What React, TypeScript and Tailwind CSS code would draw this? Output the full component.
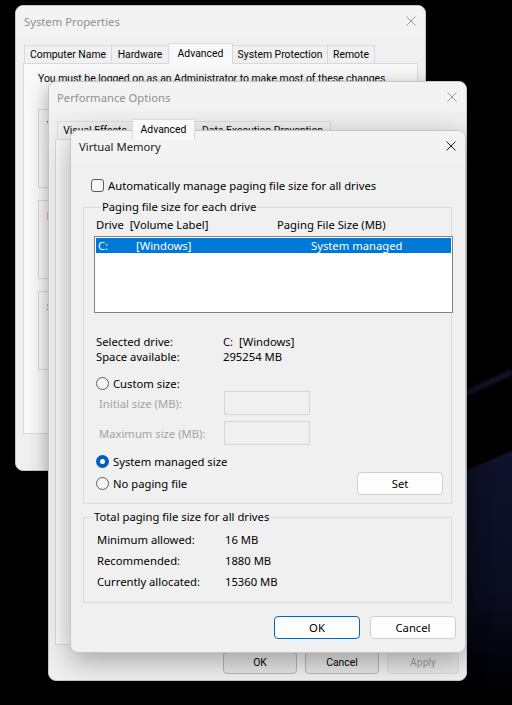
import type { ReactNode } from 'react';

function CloseIcon({ active }: { active?: boolean }) {
  return (
    <svg width="10" height="10" viewBox="0 0 10 10" className="shrink-0">
      <path d="M0.5 0.5 L9.5 9.5 M9.5 0.5 L0.5 9.5" stroke={active ? '#1a1a1a' : '#9a9a9a'} strokeWidth="1" fill="none" />
    </svg>
  );
}

function Window({ title, active, className, children }: { title: string; active?: boolean; className: string; children: ReactNode }) {
  return (
    <div className={`absolute flex flex-col overflow-hidden rounded-lg border border-[#c6c6c6] bg-[#f0f0f0] ${className}`}>
      <div className="flex h-[30px] shrink-0 items-center justify-between bg-[#f3f3f3] pl-[8px] pr-[9px] font-['Segoe_UI','Noto_Sans',sans-serif] text-[11.25px]">
        <span className={active ? 'text-[#1a1a1a]' : 'text-[#8f8f8f]'}>{title}</span>
        <CloseIcon active={active} />
      </div>
      {children}
    </div>
  );
}

function Radio({ checked }: { checked?: boolean }) {
  if (checked) {
    return (
      <span className="flex h-[13px] w-[13px] shrink-0 items-center justify-center rounded-full bg-[#005fb8]">
        <span className="h-[5px] w-[5px] rounded-full bg-white" />
      </span>
    );
  }
  return <span className="h-[13px] w-[13px] shrink-0 rounded-full border border-[#5c5c5c] bg-[#f5f5f5]" />;
}

function Button({ label, primary, dim, disabled, className }: { label: string; primary?: boolean; dim?: boolean; disabled?: boolean; className: string }) {
  let look = 'border-[#d0d0d0] bg-[#fdfdfd] text-black';
  if (primary) look = 'border-[#0067c0] bg-[#fdfdfd] text-black';
  if (dim) look = 'border-[#b8b8b8] bg-[#e6e6e6] text-black';
  if (disabled) look = 'border-[#dcdcdc] bg-[#e8e8e8] text-[#9d9d9d]';
  return (
    <div className={`flex h-[23px] shrink-0 items-center justify-center whitespace-nowrap rounded-[4px] border ${look} ${className}`}>
      {label}
    </div>
  );
}

function Tab({ label, selected, width }: { label: string; selected?: boolean; width: string }) {
  return (
    <div
      className={`-ml-px flex shrink-0 items-center justify-center whitespace-nowrap border border-b-0 border-[#d9d9d9] ${width} ${
        selected ? 'z-10 -mb-px h-[21px] bg-[#f9f9f9] pb-[2px]' : 'h-[18px] bg-[#f0f0f0]'
      }`}
    >
      {label}
    </div>
  );
}

function SmallGroup({ title, text, className }: { title: string; text: string; className?: string }) {
  return (
    <fieldset className={`h-[86px] shrink-0 border border-[#dcdcdc] px-[8px] ${className ?? ''}`}>
      <legend className="ml-[5px] whitespace-nowrap px-[2px]">{title}</legend>
      <p className="mt-[1px] whitespace-nowrap">{text}</p>
      <div className="mt-[24px] flex justify-end">
        <Button label="Settings..." className="w-[75px]" />
      </div>
    </fieldset>
  );
}

function Wallpaper() {
  return (
    <svg className="absolute inset-0" width="512" height="705" viewBox="0 0 512 705">
      <defs>
        <linearGradient id="navy" x1="0" y1="0" x2="0" y2="1">
          <stop offset="0" stopColor="#0f122b" />
          <stop offset="0.55" stopColor="#0b0d20" />
          <stop offset="0.9" stopColor="#020205" />
          <stop offset="1" stopColor="#000" />
        </linearGradient>
        <filter id="soft">
          <feGaussianBlur stdDeviation="2" />
        </filter>
      </defs>
      <rect width="512" height="705" fill="#000" />
      <polygon points="462,472 512,451 512,705 462,705" fill="url(#navy)" />
      <path d="M455 398 L512 372" stroke="#1c2040" strokeWidth="4" filter="url(#soft)" />
    </svg>
  );
}

export default function App() {
  return (
    <div className="relative h-[705px] w-[512px] overflow-hidden bg-black font-['Segoe_UI','Noto_Sans',sans-serif] text-[11.25px] leading-[15px] text-black">
      <Wallpaper />

      {/* System Properties */}
      <Window title="System Properties" className="left-[15px] top-[5px] h-[466px] w-[411px] shadow-[0_6px_20px_rgba(0,0,0,0.35)]">
        <div className="flex flex-1 flex-col px-[7px] pt-[7px] font-['Roboto',sans-serif] text-[10.4px]">
          <div className="flex items-end pl-[2px]">
            <Tab label="Computer Name" width="w-[88px]" />
            <Tab label="Hardware" width="w-[58px]" />
            <Tab label="Advanced" width="w-[65px]" selected />
            <Tab label="System Protection" width="w-[96px]" />
            <Tab label="Remote" width="w-[48px]" />
          </div>
          <div className="flex h-[371px] flex-col gap-[5px] overflow-hidden border border-[#d9d9d9] bg-[#f9f9f9] px-[14px] pt-[7px]">
            <p className="whitespace-nowrap">You must be logged on as an Administrator to make most of these changes.</p>
            <SmallGroup title="Performance" text="Visual effects, processor scheduling, memory usage, and virtual memory" className="mt-[11px]" />
            <SmallGroup title="User Profiles" text="Desktop settings related to your sign-in" />
            <SmallGroup title="Startup and Recovery" text="System startup, system failure, and debugging information" />
          </div>
          <div className="mt-[8px] flex justify-end gap-[8px]">
            <Button label="OK" className="w-[75px]" />
            <Button label="Cancel" className="w-[75px]" />
            <Button label="Apply" disabled className="w-[75px]" />
          </div>
        </div>
      </Window>

      {/* Performance Options */}
      <Window title="Performance Options" className="left-[48px] top-[81px] h-[600px] w-[419px] shadow-[0_6px_20px_rgba(0,0,0,0.35)]">
        <div className="flex flex-1 flex-col px-[6px] pt-[7px] font-['Roboto',sans-serif] text-[10.4px]">
          <div className="flex items-end pl-[3px]">
            <Tab label="Visual Effects" width="w-[76px]" />
            <Tab label="Advanced" width="w-[63px]" selected />
            <Tab label="Data Execution Prevention" width="w-[137px]" />
          </div>
          <div className="h-[506px] border border-[#d9d9d9] bg-[#f9f9f9]" />
          <div className="mt-[6px] flex justify-end gap-[8px] pr-[1px]">
            <Button label="OK" dim className="w-[74px]" />
            <Button label="Cancel" dim className="w-[74px]" />
            <Button label="Apply" disabled className="w-[72px]" />
          </div>
        </div>
      </Window>

      {/* Virtual Memory */}
      <Window title="Virtual Memory" active className="left-[70px] top-[130px] h-[523px] w-[396px] shadow-[0_8px_28px_rgba(0,0,0,0.32)]">
        <div className="flex flex-1 flex-col pl-[12px] pr-[9px]">
          <label className="mt-[18px] flex h-[13px] items-center gap-[4px] pl-[8px]">
            <span className="h-[13px] w-[13px] shrink-0 rounded-[3px] border border-[#5c5c5c] bg-[#f5f5f5]" />
            <span className="whitespace-nowrap">Automatically manage paging file size for all drives</span>
          </label>

          <fieldset className="mr-[4px] mt-[7px] h-[305px] border border-[#dcdcdc] pl-[10px]">
            <legend className="ml-[7px] px-[1px] leading-[16px]">Paging file size for each drive</legend>
            <div className="mt-[2px] flex whitespace-nowrap pl-[2px]">
              <span className="w-[181px] whitespace-pre">{'Drive  [Volume Label]'}</span>
              <span>Paging File Size (MB)</span>
            </div>
            <div className="-mr-[2px] mt-[4px] h-[77px] border border-[#828282] bg-white p-[1px]">
              <div className="flex h-[15px] items-center whitespace-nowrap bg-[#0078d7] pl-[2px] text-white">
                <span className="w-[38px]">C:</span>
                <span className="w-[175px]">[Windows]</span>
                <span>System managed</span>
              </div>
            </div>

            <div className="mt-[21px] grid grid-cols-[127px_1fr] whitespace-nowrap pl-[2px]">
              <span>Selected drive:</span>
              <span className="whitespace-pre">{'C:  [Windows]'}</span>
              <span>Space available:</span>
              <span>295254 MB</span>
            </div>

            <div className="mt-[12px] flex items-center gap-[4px] pl-[2px]">
              <Radio />
              <span>Custom size:</span>
            </div>
            <div className="flex flex-col gap-[6px] whitespace-nowrap pl-[5px] text-[#a3a3a3]">
              <div className="flex items-center">
                <span className="w-[125px]">Initial size (MB):</span>
                <span className="h-[24px] w-[86px] border border-[#d6d6d6] bg-[#f0f0f0]" />
              </div>
              <div className="flex items-center">
                <span className="w-[125px]">Maximum size (MB):</span>
                <span className="h-[24px] w-[86px] border border-[#d6d6d6] bg-[#f0f0f0]" />
              </div>
            </div>

            <div className="mt-[9px] flex items-center gap-[4px] pl-[2px]">
              <Radio checked />
              <span>System managed size</span>
            </div>
            <div className="mt-[3px] flex items-center justify-between pl-[2px] pr-[8px]">
              <div className="flex items-center gap-[4px]">
                <Radio />
                <span>No paging file</span>
              </div>
              <Button label="Set" className="w-[86px]" />
            </div>
          </fieldset>

          <fieldset className="mr-[4px] mt-[5px] h-[94px] border border-[#dcdcdc] pl-[13px]">
            <legend className="-ml-[4px] px-[1px] leading-[16px]">Total paging file size for all drives</legend>
            <div className="mt-[4px] grid grid-cols-[128px_1fr] whitespace-nowrap leading-[21px]">
              <span>Minimum allowed:</span>
              <span>16 MB</span>
              <span>Recommended:</span>
              <span>1880 MB</span>
              <span>Currently allocated:</span>
              <span>15360 MB</span>
            </div>
          </fieldset>

          <div className="mt-[13px] flex justify-end gap-[10px]">
            <Button label="OK" primary className="w-[86px]" />
            <Button label="Cancel" className="w-[86px]" />
          </div>
        </div>
      </Window>
    </div>
  );
}
